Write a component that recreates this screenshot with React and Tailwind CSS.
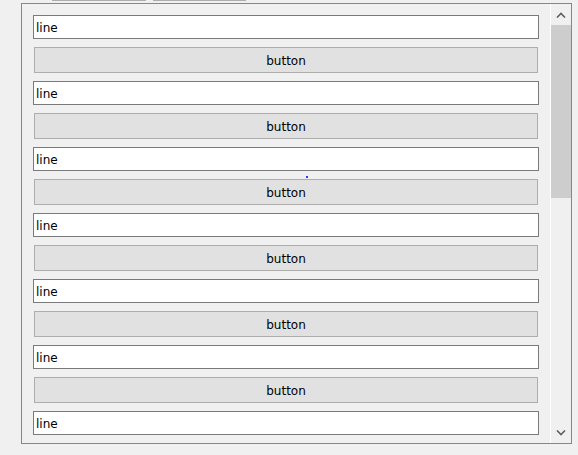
export default function App() {
  const rows = [0, 1, 2, 3, 4, 5, 6];

  return (
    <div
      className="relative w-[578px] h-[455px] bg-[#f0f0f0] overflow-hidden"
      style={{ fontFamily: '"DejaVu Sans", Tahoma, sans-serif' }}
    >
      {/* bottoms of the tab buttons above */}
      <div className="flex h-[3px]">
        <div className="ml-[52px] w-[94px] h-px bg-[#adadad]" />
        <div className="ml-[7px] w-[93px] h-px bg-[#adadad]" />
      </div>

      <div className="ml-[21px] w-[551px] h-[441px] border border-[#828790] flex">
        <div className="relative flex-1 overflow-hidden">
          <div className="flex flex-col gap-2 pt-[11px] px-[11px]">
            {rows.map((i) => (
              <div key={i} className="flex flex-col gap-2">
                <div className="h-6 border border-[#7a7a7a] bg-white flex items-center pl-[2px] pt-[2px] text-[12px] text-black">
                  line
                </div>
                {i < 6 && (
                  <div className="mx-px h-[26px] border border-[#adadad] bg-[#e1e1e1] flex items-center justify-center pt-[2px] text-[12px] text-black">
                    button
                  </div>
                )}
              </div>
            ))}
          </div>
          <div className="absolute left-[284px] top-[172px] w-[2px] h-[2px] bg-[#2040ff]" />
        </div>

        <div className="w-px bg-white" />
        <div className="w-5 bg-[#f0f0f0] flex flex-col">
          <div className="h-[21px] flex items-center justify-center">
            <svg width="10" height="6" viewBox="0 0 10 6">
              <path d="M1 5.5 L5 1.5 L9 5.5" fill="none" stroke="#606060" strokeWidth="1.6" />
            </svg>
          </div>
          <div className="h-[173px] bg-[#cdcdcd]" />
          <div className="flex-1" />
          <div className="h-[21px] flex items-center justify-center">
            <svg width="10" height="6" viewBox="0 0 10 6">
              <path d="M1 0.5 L5 4.5 L9 0.5" fill="none" stroke="#606060" strokeWidth="1.6" />
            </svg>
          </div>
        </div>
      </div>
    </div>
  );
}
